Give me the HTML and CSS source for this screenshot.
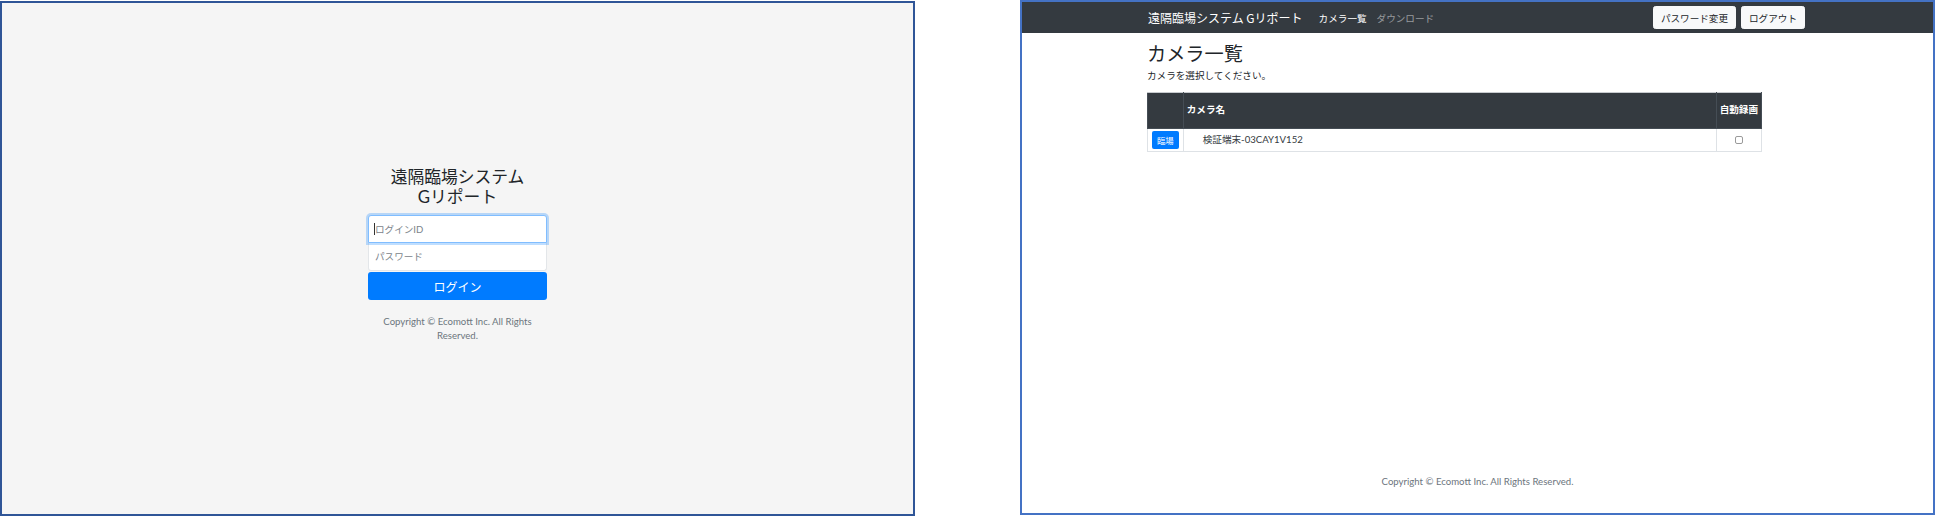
FILE: index.html
```html
<!DOCTYPE html>
<html lang="ja">

<head>
    <meta charset="UTF-8">
    <meta name="viewport" content="width=device-width, initial-scale=1.0">
    <title>遠隔臨場システム Gリポート</title>
    <link rel="stylesheet" href="styles.css">
</head>

<body>
    <div class="screens">
        <!-- login screen -->
        <section class="login">
            <form class="login_form">
                <h1 class="login_title">遠隔臨場システム Gリポート</h1>
                <div class="login_field">
                    <input type="text" class="login_input login_input--id is-focused" placeholder="ログインID" autocomplete="off">
                    <span class="login_caret"></span>
                </div>
                <input type="password" class="login_input login_input--pass" placeholder="パスワード">
                <button class="login_button" type="submit">ログイン</button>
                <p class="login_copyright">Copyright © Ecomott Inc. All Rights Reserved.</p>
            </form>
        </section>

        <!-- camera list screen -->
        <section class="app">
            <nav class="navbar">
                <div class="navbar_inner">
                    <a class="navbar_brand" href="#">遠隔臨場システム Gリポート</a>
                    <a class="navbar_link navbar_link--active" href="#">カメラ一覧</a>
                    <a class="navbar_link" href="#">ダウンロード</a>
                    <div class="navbar_actions">
                        <button class="btn_light" type="button">パスワード変更</button>
                        <button class="btn_light" type="button">ログアウト</button>
                    </div>
                </div>
            </nav>

            <main class="main">
                <h2 class="main_title">カメラ一覧</h2>
                <p class="main_lead">カメラを選択してください。</p>
                <table class="cameras">
                    <thead>
                        <tr>
                            <th class="cameras_go"></th>
                            <th class="cameras_name">カメラ名</th>
                            <th class="cameras_auto">自動録画</th>
                        </tr>
                    </thead>
                    <tbody>
                        <tr>
                            <td class="cameras_go"><button class="btn_go" type="button">臨場</button></td>
                            <td class="cameras_label">検証端末-03CAY1V152</td>
                            <td class="cameras_check"><input type="checkbox" class="checkbox"></td>
                        </tr>
                    </tbody>
                </table>
            </main>

            <footer class="footer">Copyright © Ecomott Inc. All Rights Reserved.</footer>
        </section>
    </div>
</body>

</html>
```

FILE: styles.css
```css
html,
body {
    margin: 0;
    height: 516px;
    overflow: hidden;
}

body {
    font-family: "Lato", "Noto Sans CJK JP", sans-serif;
    color: #212529;
    background: #fff;
}

.screens {
    display: flex;
    align-items: flex-start;
    gap: 105px;
}

/* ---------- login ---------- */

.login {
    box-sizing: border-box;
    width: 915px;
    height: 515px;
    margin-top: 1px;
    border: 2px solid #2f5597;
    background: #f5f5f5;
    display: flex;
    justify-content: center;
    padding-top: 164px;
}

.login_form {
    width: 179px;
    display: flex;
    flex-direction: column;
    align-items: stretch;
}

.login_title {
    margin: 0 0 8px;
    font-size: 16.8px;
    line-height: 20px;
    font-weight: 400;
    text-align: center;
    color: #212529;
    word-break: keep-all;
}

.login_field {
    position: relative;
}

.login_input {
    box-sizing: border-box;
    display: block;
    width: 100%;
    height: 28px;
    margin: 0;
    padding: 0 6px;
    border: 1px solid #e3e6e9;
    background: #fff;
    font-family: inherit;
    font-size: 9.6px;
    color: #495057;
    outline: none;
}

.login_input::placeholder {
    color: #7b838a;
}

.login_input--id {
    border-radius: 3px 3px 0 0;
}

.login_input--id.is-focused {
    border-color: #80bdff;
    box-shadow: 0 0 0 2px rgba(0, 123, 255, 0.25);
    position: relative;
    z-index: 1;
}

.login_input--pass {
    border-top: none;
    border-radius: 0 0 3px 3px;
}

.login_caret {
    position: absolute;
    left: 6px;
    top: 8px;
    width: 1px;
    height: 12px;
    background: #333;
    z-index: 2;
}

.login_button {
    height: 28px;
    margin-top: 1px;
    border: none;
    border-radius: 3px;
    background: #007bff;
    color: #fff;
    font-family: inherit;
    font-size: 12px;
    cursor: pointer;
}

.login_copyright {
    margin: 15px 0 0;
    font-size: 9.6px;
    line-height: 13.5px;
    text-align: center;
    color: #6c757d;
}

/* ---------- camera list ---------- */

.app {
    box-sizing: border-box;
    width: 915px;
    height: 515px;
    border: 2px solid #4472c4;
    display: flex;
    flex-direction: column;
}

.navbar {
    height: 31px;
    background: #343a40;
    flex-shrink: 0;
}

.navbar_inner {
    box-sizing: border-box;
    width: 783px;
    height: 100%;
    padding-left: 126px;
    display: flex;
    align-items: center;
}

.navbar_brand {
    font-family: "Noto Sans CJK JP", sans-serif;
    font-size: 12px;
    color: #fff;
    text-decoration: none;
    margin-right: 11px;
}

.navbar_link {
    font-family: "Noto Sans CJK JP", sans-serif;
    font-size: 9.6px;
    color: rgba(255, 255, 255, 0.5);
    text-decoration: none;
    padding: 0 5px;
}

.navbar_link--active {
    color: #fff;
}

.navbar_actions {
    margin-left: auto;
    display: flex;
    gap: 5px;
}

.btn_light {
    height: 23px;
    padding: 0 7px;
    border: 1px solid #f8f9fa;
    border-radius: 2.5px;
    background: #f8f9fa;
    color: #212529;
    font-family: "Noto Sans CJK JP", sans-serif;
    font-size: 9.6px;
}

.main {
    flex: 1;
    margin-left: 125px;
    padding-top: 9px;
}

.main_title {
    margin: 0 0 4px;
    font-family: "Noto Sans CJK JP", sans-serif;
    font-size: 19.2px;
    line-height: 23px;
    font-weight: 400;
}

.main_lead {
    margin: 0 0 9px;
    font-size: 9.6px;
    line-height: 14.4px;
}

.cameras {
    width: 615px;
    border-collapse: collapse;
    font-size: 9.6px;
    line-height: 14.4px;
}

.cameras th {
    background: #343a40;
    color: #fff;
    font-weight: 700;
    text-align: left;
    padding: 10px 3px;
    border: 1px solid #454d55;
    border-top-color: #c8cbcf;
    white-space: nowrap;
}

.cameras .cameras_go,
.cameras .cameras_auto {
    width: 1%;
}

.cameras td {
    padding: 2px 4px;
    border: 1px solid #dee2e6;
    vertical-align: middle;
}

.cameras .cameras_label {
    padding-left: 19px;
    color: #343a40;
}

.cameras .cameras_check {
    text-align: center;
}

.btn_go {
    display: block;
    height: 18px;
    padding: 0 5px;
    border: none;
    border-radius: 2px;
    background: #007bff;
    color: #fff;
    font-family: "Noto Sans CJK JP", sans-serif;
    font-size: 8.4px;
    white-space: nowrap;
}

.checkbox {
    appearance: none;
    display: block;
    margin: 0 auto;
    width: 8px;
    height: 8px;
    border: 1px solid #9a9a9a;
    border-radius: 2px;
    background: #fff;
}

.footer {
    padding-bottom: 24px;
    text-align: center;
    font-size: 9.6px;
    line-height: 14px;
    color: #6c757d;
}
```
